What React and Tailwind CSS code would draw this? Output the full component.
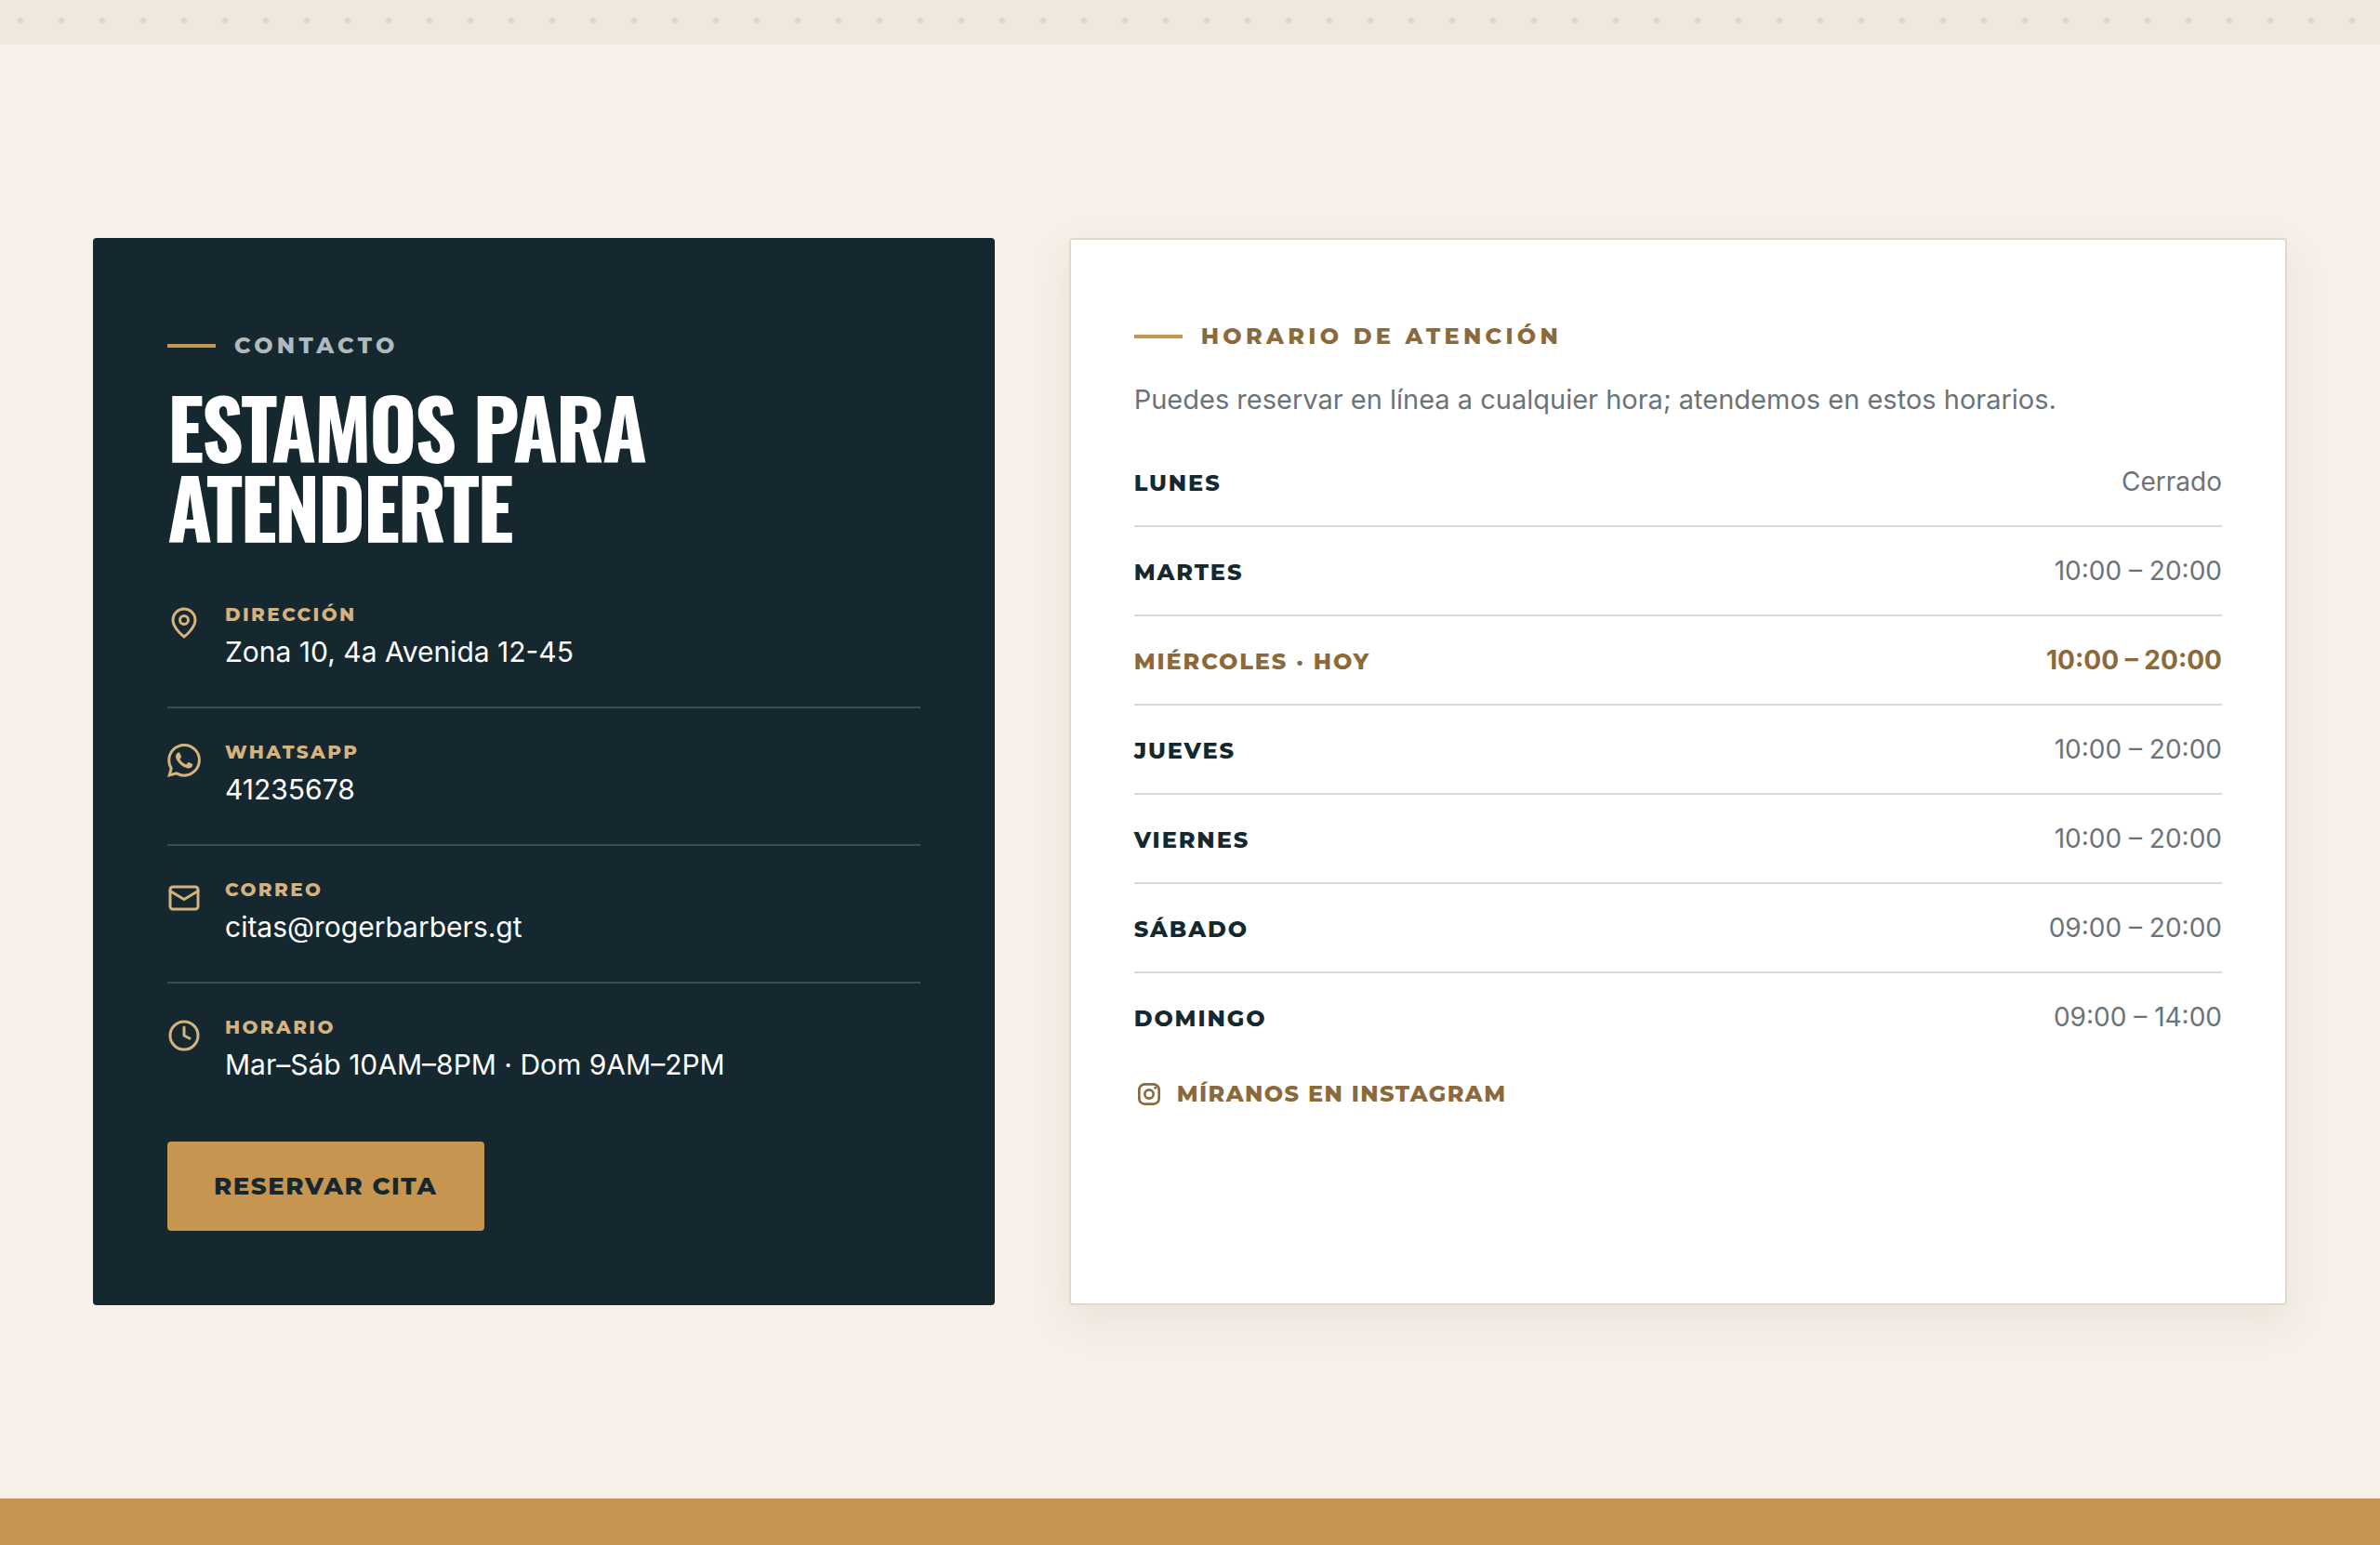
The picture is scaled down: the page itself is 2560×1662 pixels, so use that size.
import { Clock } from "lucide-react";

const contactItems = [
  { icon: PinIcon, label: "Dirección", value: "Zona 10, 4a Avenida 12-45" },
  { icon: WhatsAppIcon, label: "WhatsApp", value: "41235678" },
  { icon: MailIcon, label: "Correo", value: "citas@rogerbarbers.gt" },
  { icon: ClockIcon, label: "Horario", value: "Mar–Sáb 10AM–8PM · Dom 9AM–2PM" },
];

const schedule = [
  { day: "Lunes", hours: "Cerrado" },
  { day: "Martes", hours: "10:00 – 20:00" },
  { day: "Miércoles", hours: "10:00 – 20:00", today: true },
  { day: "Jueves", hours: "10:00 – 20:00" },
  { day: "Viernes", hours: "10:00 – 20:00" },
  { day: "Sábado", hours: "09:00 – 20:00" },
  { day: "Domingo", hours: "09:00 – 14:00" },
];

function PinIcon() {
  return (
    <svg viewBox="0 0 24 24" className="size-9" fill="none" stroke="currentColor" strokeWidth="2" strokeLinejoin="round">
      <path d="M12 22s8-6 8-12a8 8 0 1 0-16 0c0 6 8 12 8 12z" />
      <circle cx="12" cy="10" r="3" />
    </svg>
  );
}

function WhatsAppIcon() {
  return (
    <svg viewBox="0 0 24 24" className="size-9" fill="currentColor">
      <path d="M17.472 14.382c-.297-.149-1.758-.867-2.03-.967-.273-.099-.471-.148-.67.15-.197.297-.767.966-.94 1.164-.173.199-.347.223-.644.075-.297-.15-1.255-.463-2.39-1.475-.883-.788-1.48-1.761-1.653-2.059-.173-.297-.018-.458.13-.606.134-.133.298-.347.446-.52.149-.174.198-.298.298-.497.099-.198.05-.371-.025-.52-.075-.149-.669-1.612-.916-2.207-.242-.579-.487-.5-.669-.51-.173-.008-.371-.01-.57-.01-.198 0-.52.074-.792.372-.272.297-1.04 1.016-1.04 2.479 0 1.462 1.065 2.875 1.213 3.074.149.198 2.096 3.2 5.077 4.487.709.306 1.262.489 1.694.625.712.227 1.36.195 1.871.118.571-.085 1.758-.719 2.006-1.413.248-.694.248-1.289.173-1.413-.074-.124-.272-.198-.57-.347" />
      <path d="M12.05 0C5.5 0 .16 5.34.16 11.89c0 2.1.55 4.14 1.59 5.95L.06 24l6.3-1.65a11.9 11.9 0 0 0 5.69 1.45c6.55 0 11.89-5.34 11.89-11.9A11.8 11.8 0 0 0 12.05 0m0 21.79a9.9 9.9 0 0 1-5.03-1.38l-.36-.21-3.74.98 1-3.65-.24-.37a9.86 9.86 0 0 1-1.51-5.26c0-5.45 4.44-9.89 9.89-9.89a9.88 9.88 0 0 1 9.88 9.89c0 5.46-4.43 9.89-9.89 9.89" />
    </svg>
  );
}

function MailIcon() {
  return (
    <svg viewBox="0 0 24 24" className="size-9" fill="none" stroke="currentColor" strokeWidth="2" strokeLinecap="round" strokeLinejoin="round">
      <rect x="2" y="4" width="20" height="16" rx="2" />
      <path d="m2 7 10 6 10-6" />
    </svg>
  );
}

function ClockIcon() {
  return <Clock className="size-9" strokeWidth={2} />;
}

function InstagramIcon() {
  return (
    <svg viewBox="0 0 24 24" className="size-8" fill="none" stroke="currentColor" strokeWidth="2">
      <rect x="4" y="4" width="16" height="16" rx="4.5" />
      <circle cx="12" cy="12" r="3.5" />
      <circle cx="17" cy="7" r="1.1" fill="currentColor" stroke="none" />
    </svg>
  );
}

function Eyebrow({ children, className }) {
  return (
    <p className={`flex items-center gap-5 py-4 font-['Montserrat',sans-serif] text-2xl leading-10 font-extrabold tracking-[0.18em] uppercase ${className}`}>
      <span className="h-1 w-[52px] bg-[#c69651]" />
      {children}
    </p>
  );
}

function ContactCard() {
  return (
    <article className="rounded bg-[#152830] p-20 text-white">
      <Eyebrow className="text-[#b0b9bc]">Contacto</Eyebrow>
      <h2 className="mt-[7px] font-['Oswald',sans-serif] text-[88px] leading-[86px] font-bold tracking-[-0.03em] uppercase">
        Estamos para
        <br />
        atenderte
      </h2>
      <ul className="mt-[27px] divide-y-2 divide-[#3b4b53]">
        {contactItems.map(({ icon: Icon, label, value }) => (
          <li key={label} className="flex gap-[26px] py-[35px]">
            <span className="mt-[3px] text-[#d6b27e]">
              <Icon />
            </span>
            <div>
              <p className="mb-1 font-['Montserrat',sans-serif] text-xl leading-6 font-extrabold tracking-[0.12em] text-[#d6b27e] uppercase">
                {label}
              </p>
              <p className="text-[30px] leading-12">{value}</p>
            </div>
          </li>
        ))}
      </ul>
      <button
        type="button"
        className="mt-6 rounded bg-[#c69651] px-[50px] font-['Montserrat',sans-serif] text-[26px] leading-24 font-extrabold tracking-[0.06em] text-[#152830] uppercase"
      >
        Reservar cita
      </button>
    </article>
  );
}

function ScheduleCard() {
  return (
    <article className="rounded border-2 border-[#dddaca] bg-white p-[68px] shadow-[0_16px_48px_rgba(60,60,30,0.08)]">
      <Eyebrow className="text-[#8c693a]">Horario de atención</Eyebrow>
      <p className="mt-2 text-[29px] leading-12 text-[#6b7378]">
        Puedes reservar en línea a cualquier hora; atendemos en estos horarios.
      </p>
      <table className="mt-[17px] w-full">
        <tbody className="divide-y-2 divide-[#e0d8cb]">
          {schedule.map(({ day, hours, today }) => (
            <tr key={day} className={today ? "text-[#8c693a]" : "text-[#152830]"}>
              <th
                scope="row"
                className="pt-[25px] pb-[23px] text-left align-baseline font-['Montserrat',sans-serif] text-2xl leading-11 font-extrabold tracking-[0.08em] uppercase"
              >
                {day}
                {today && " · Hoy"}
              </th>
              <td
                className={`pt-[25px] pb-[23px] text-right align-baseline text-[28px] leading-11 ${today ? "font-bold" : "text-[#6b7378]"}`}
              >
                {hours}
              </td>
            </tr>
          ))}
        </tbody>
      </table>
      <a
        href="#instagram"
        className="mt-4 inline-flex items-center gap-3.5 font-['Montserrat',sans-serif] text-2xl leading-10 font-extrabold tracking-[0.06em] text-[#8c693a] uppercase"
      >
        <InstagramIcon />
        Míranos en Instagram
      </a>
    </article>
  );
}

export default function App() {
  return (
    <div className="min-h-screen bg-[#f7f0e9] font-['Inter',sans-serif]">
      <div className="h-12 bg-[#efe8dc] bg-[radial-gradient(circle_at_22px_22px,#dcd5ca_2px,transparent_4px)] bg-size-[44px_48px]" />
      <section className="grid grid-cols-[0.74fr_1fr] gap-20 px-[100px] py-52">
        <ContactCard />
        <ScheduleCard />
      </section>
      <div className="h-[50px] bg-[#c69651]" />
    </div>
  );
}
